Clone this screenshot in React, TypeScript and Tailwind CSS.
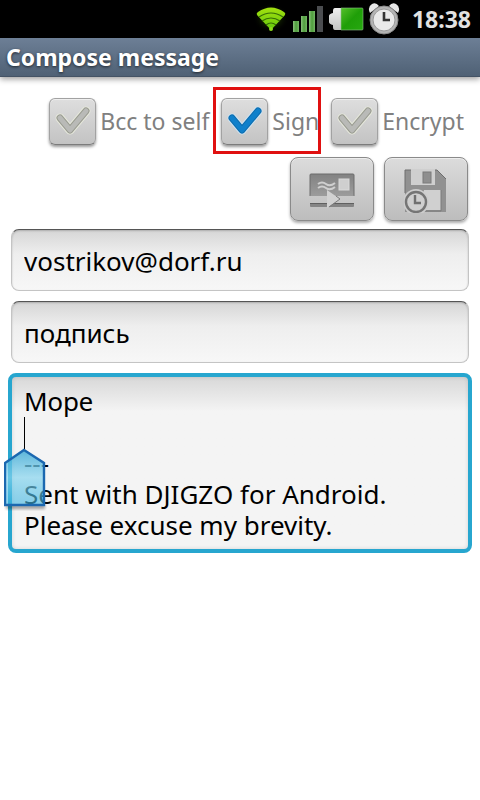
import { useState } from "react";
import type { ReactNode } from "react";

type CheckOptionProps = {
  label: string;
  checked: boolean;
  highlighted?: boolean;
  onChange: (checked: boolean) => void;
};

function WifiIcon() {
  return (
    <svg width="36" height="32" viewBox="0 0 36 32" aria-hidden="true">
      <defs>
        <radialGradient id="wifiGlow">
          <stop offset="0" stopColor="#4f9a00" stopOpacity="0.75" />
          <stop offset="1" stopColor="#000" stopOpacity="0" />
        </radialGradient>
        <linearGradient id="wifiFill" x1="0" y1="0" x2="0" y2="1">
          <stop offset="0" stopColor="#a4e010" />
          <stop offset="1" stopColor="#63c80c" />
        </linearGradient>
      </defs>
      <ellipse cx="18" cy="15" rx="18" ry="15" fill="url(#wifiGlow)" />
      <path d="M18 27 L4 12 Q3 10 5 9 Q18 0 31 9 Q33 10 32 12 Z" fill="url(#wifiFill)" />
      <path
        d="M6 14 Q18 6 30 14 M9 18 Q18 12 27 18 M13 22 Q18 18 23 22"
        fill="none"
        stroke="#356c06"
        strokeWidth="1.2"
      />
      <circle cx="18" cy="26" r="2" fill="#8ddc1c" />
    </svg>
  );
}

function SignalIcon() {
  return (
    <svg width="30" height="26" viewBox="0 0 30 26" aria-hidden="true">
      <defs>
        <linearGradient id="bar" x1="0" y1="0" x2="1" y2="0">
          <stop offset="0" stopColor="#8ac07c" />
          <stop offset="0.5" stopColor="#4f9e3c" />
          <stop offset="1" stopColor="#75b565" />
        </linearGradient>
      </defs>
      <rect x="0" y="15" width="6" height="11" fill="url(#bar)" />
      <rect x="8" y="10" width="6" height="16" fill="url(#bar)" />
      <rect x="16" y="5" width="6" height="21" fill="url(#bar)" />
      <rect x="24" y="0" width="6" height="26" fill="#4b4d50" />
    </svg>
  );
}

function BatteryIcon() {
  return (
    <svg width="35" height="24" viewBox="0 0 35 24" aria-hidden="true">
      <defs>
        <linearGradient id="cell" x1="0" y1="0" x2="1" y2="1">
          <stop offset="0" stopColor="#55c02a" />
          <stop offset="0.5" stopColor="#1f9e08" />
          <stop offset="1" stopColor="#27a810" />
        </linearGradient>
        <linearGradient id="cap" x1="0" y1="0" x2="0" y2="1">
          <stop offset="0" stopColor="#f0f0f0" />
          <stop offset="1" stopColor="#c2c4c2" />
        </linearGradient>
      </defs>
      <path d="M6 1 H14 V23 H6 Q4 23 4 20 V18 Q0 17 0 15 V9 Q0 7 4 6 V4 Q4 1 6 1 Z" fill="url(#cap)" />
      <path d="M12 1 H33 Q34 1 34 2 V22 Q34 23 33 23 H12 Z" fill="url(#cell)" stroke="#8fc08a" strokeWidth="0.6" />
    </svg>
  );
}

function AlarmIcon() {
  return (
    <svg width="32" height="32" viewBox="0 0 32 32" aria-hidden="true">
      <path d="M2 10 Q-1 4 4 1 Q8 -1 11 3 Z M30 10 Q33 4 28 1 Q24 -1 21 3 Z" fill="#e6e6e6" />
      <circle cx="16" cy="17" r="14" fill="#b4b4b4" stroke="#8a8a8a" strokeWidth="1" />
      <circle cx="16" cy="17" r="11" fill="#e9e9e9" stroke="#999" strokeWidth="1" />
      <path d="M16 9 V17 H22" fill="none" stroke="#333" strokeWidth="2.6" />
    </svg>
  );
}

function SendIcon() {
  return (
    <svg width="46" height="36" viewBox="0 0 46 36" aria-hidden="true">
      <defs>
        <linearGradient id="mail" x1="0" y1="0" x2="0" y2="1">
          <stop offset="0" stopColor="#828282" />
          <stop offset="1" stopColor="#9c9c9c" />
        </linearGradient>
      </defs>
      <rect x="1" y="1" width="44" height="22" rx="1" fill="url(#mail)" />
      <path d="M1 23 V2 Q1 1 2 1 H44 Q45 1 45 2 V23" fill="none" stroke="#6c6c6c" />
      <path
        d="M9 11 q4 -3 8 0 t9 -1 M9 15 q4 -3 8 0 t9 -1"
        fill="none"
        stroke="#cfcfcf"
        strokeWidth="2"
      />
      <rect x="30" y="6" width="10" height="11" fill="#cfcfcf" stroke="#dadada" />
      <rect x="1" y="30" width="44" height="4" rx="1" fill="#858585" />
      <path d="M1 30.5 H45" stroke="#606060" />
      <path d="M18 17 L31 26 L18 35 Z" fill="#d2d2d2" />
      <path d="M20 34 L31 26 L27 23" fill="none" stroke="#7c7c7c" />
    </svg>
  );
}

function SaveDraftIcon() {
  return (
    <svg width="44" height="44" viewBox="0 0 44 44" aria-hidden="true">
      <path d="M1 1 H33 L42 10 V43 H1 Z" fill="#919191" />
      <path d="M1 24 V1 H7 M31 1 H33 L42 10" fill="none" stroke="#6e6e6e" />
      <path d="M7 0 H31 V16 H7 Z" fill="#cfcfcf" />
      <rect x="19" y="3" width="8" height="11" fill="#8f8f8f" stroke="#7b7b7b" />
      <path d="M20 21 H37 V41 H16 Z" fill="#d0d0d0" />
      <path d="M18 42 H37 V21" fill="none" stroke="#7d7d7d" />
      <circle cx="12" cy="33" r="13" fill="#cdcdcd" />
      <circle cx="12" cy="33" r="10" fill="#cfcfcf" stroke="#757575" strokeWidth="2.4" />
      <path d="M11 26 V34 H17" fill="none" stroke="#707070" strokeWidth="2.4" />
    </svg>
  );
}

function CheckMark({ checked }: { checked: boolean }) {
  return (
    <svg
      className="pointer-events-none absolute inset-0"
      width="47"
      height="47"
      viewBox="0 0 47 47"
      fill="none"
      strokeLinecap="round"
      strokeLinejoin="round"
      aria-hidden="true"
    >
      <path d="M11 20 L21 32 L37 13" stroke={checked ? "#cfe3f0" : "#e6e8dc"} strokeWidth="9" />
      <path d="M11 20 L21 32 L37 13" stroke={checked ? "#0d6cae" : "#9a9c92"} strokeWidth="7" />
      <path d="M11 20 L21 32 L37 13" stroke={checked ? "#0f80cb" : "#b9bab7"} strokeWidth="5" />
    </svg>
  );
}

function CheckOption({ label, checked, highlighted, onChange }: CheckOptionProps) {
  return (
    <label className="relative flex items-center gap-1 text-[23px] text-[#808080]">
      {highlighted && (
        <span className="pointer-events-none absolute -top-[11px] -right-0.5 -bottom-[9px] -left-2 border-3 border-[#e01010]" />
      )}
      <span className="relative size-[47px] shrink-0">
        <input
          type="checkbox"
          checked={checked}
          onChange={(e) => onChange(e.target.checked)}
          className="block size-full appearance-none rounded-md border border-[#a2a2a2] border-b-[#7c7c7c] bg-linear-to-b from-[#dedede] to-[#c3c3c3] shadow-[0_2px_3px_#00000066,inset_0_1px_0_#efefef]"
        />
        <CheckMark checked={checked} />
      </span>
      {label}
    </label>
  );
}

function ToolButton({ label, children }: { label: string; children: ReactNode }) {
  return (
    <button
      type="button"
      aria-label={label}
      className="flex h-16 w-21 items-center justify-center rounded-lg border border-[#8a8a8a] bg-linear-to-b from-[#dcdcdc] to-[#bdbdbd] pt-1 shadow-[0_2px_3px_#00000055,inset_0_1px_0_#ededed]"
    >
      {children}
    </button>
  );
}

function CursorHandle() {
  return (
    <svg
      className="pointer-events-none absolute top-[75px] -left-1"
      width="43"
      height="66"
      viewBox="0 0 43 66"
      aria-hidden="true"
    >
      <defs>
        <linearGradient id="handle" x1="0" y1="0" x2="0" y2="1">
          <stop offset="0" stopColor="#3fa9d4" stopOpacity="0.85" />
          <stop offset="0.5" stopColor="#86d4ee" stopOpacity="0.7" />
          <stop offset="1" stopColor="#3cb4e0" stopOpacity="0.6" />
        </linearGradient>
        <filter id="handleShadow" x="-20%" y="-20%" width="140%" height="150%">
          <feGaussianBlur stdDeviation="1.5" />
        </filter>
      </defs>
      <rect x="2" y="57" width="39" height="4" fill="#000" opacity="0.35" filter="url(#handleShadow)" />
      <path d="M20 2 L40 15 V57 H1 V15 Z" fill="url(#handle)" stroke="#1b68b0" strokeWidth="2.4" />
    </svg>
  );
}

const fieldClass =
  "block h-[62px] w-full rounded-lg border border-[#c4c4c4] border-t-[#555] bg-linear-to-b from-[#d6d6d6] via-[#eeeeee] via-40% to-[#f7f7f7] px-3 pt-0.5 text-[26px] text-black shadow-[inset_0_1px_2px_#00000033] outline-none";

export default function App() {
  const [bcc, setBcc] = useState(false);
  const [sign, setSign] = useState(true);
  const [encrypt, setEncrypt] = useState(false);

  return (
    <div className="min-h-screen bg-white font-['Noto_Sans',sans-serif]">
      <header>
        <div className="flex h-[38px] items-center justify-end bg-black pr-[9px] text-[#e2e2e2]">
          <WifiIcon />
          <div className="ml-1 flex items-center gap-1.5">
            <SignalIcon />
            <BatteryIcon />
          </div>
          <div className="ml-1 flex items-center gap-3">
            <AlarmIcon />
            <time className="text-[23px] font-bold">18:38</time>
          </div>
        </div>
        <h1 className="flex h-[39px] items-center border-b border-[#445365] bg-linear-to-b from-[#6d7f96] to-[#4f6175] px-1.5 text-[23px] font-bold text-white shadow-[0_2px_6px_#00000066] [text-shadow:0_1px_3px_#000000aa]">
          Compose message
        </h1>
      </header>

      <form onSubmit={(e) => e.preventDefault()}>
        <div className="flex justify-end gap-3 pt-[21px] pr-4">
          <CheckOption label="Bcc to self" checked={bcc} onChange={setBcc} />
          <CheckOption label="Sign" checked={sign} onChange={setSign} highlighted />
          <CheckOption label="Encrypt" checked={encrypt} onChange={setEncrypt} />
        </div>

        <div className="flex justify-end gap-2.5 pt-3 pr-3">
          <ToolButton label="Send">
            <SendIcon />
          </ToolButton>
          <ToolButton label="Save draft">
            <SaveDraftIcon />
          </ToolButton>
        </div>

        <div className="flex flex-col gap-2.5 px-[11px] pt-2">
          <input type="email" aria-label="To" defaultValue="vostrikov@dorf.ru" className={fieldClass} />
          <input type="text" aria-label="Subject" defaultValue="подпись" className={fieldClass} />
        </div>

        <div className="relative mx-2 mt-2.5">
          <textarea
            aria-label="Message"
            rows={5}
            defaultValue={"Море\n\n---\nSent with DJIGZO for Android.\nPlease excuse my brevity."}
            className="block w-full resize-none overflow-hidden rounded-lg border-4 border-[#27a6cf] bg-[#f4f4f4] bg-linear-to-b from-[#d8d8d8] to-[#f4f4f4] to-20% px-3 pt-[9px] pb-2 text-[26px] leading-[31px] text-black shadow-[inset_0_0_4px_#00000022] outline-none"
          />
          <span className="pointer-events-none absolute top-11 left-4 h-8 w-px bg-black" />
          <CursorHandle />
        </div>
      </form>
    </div>
  );
}
